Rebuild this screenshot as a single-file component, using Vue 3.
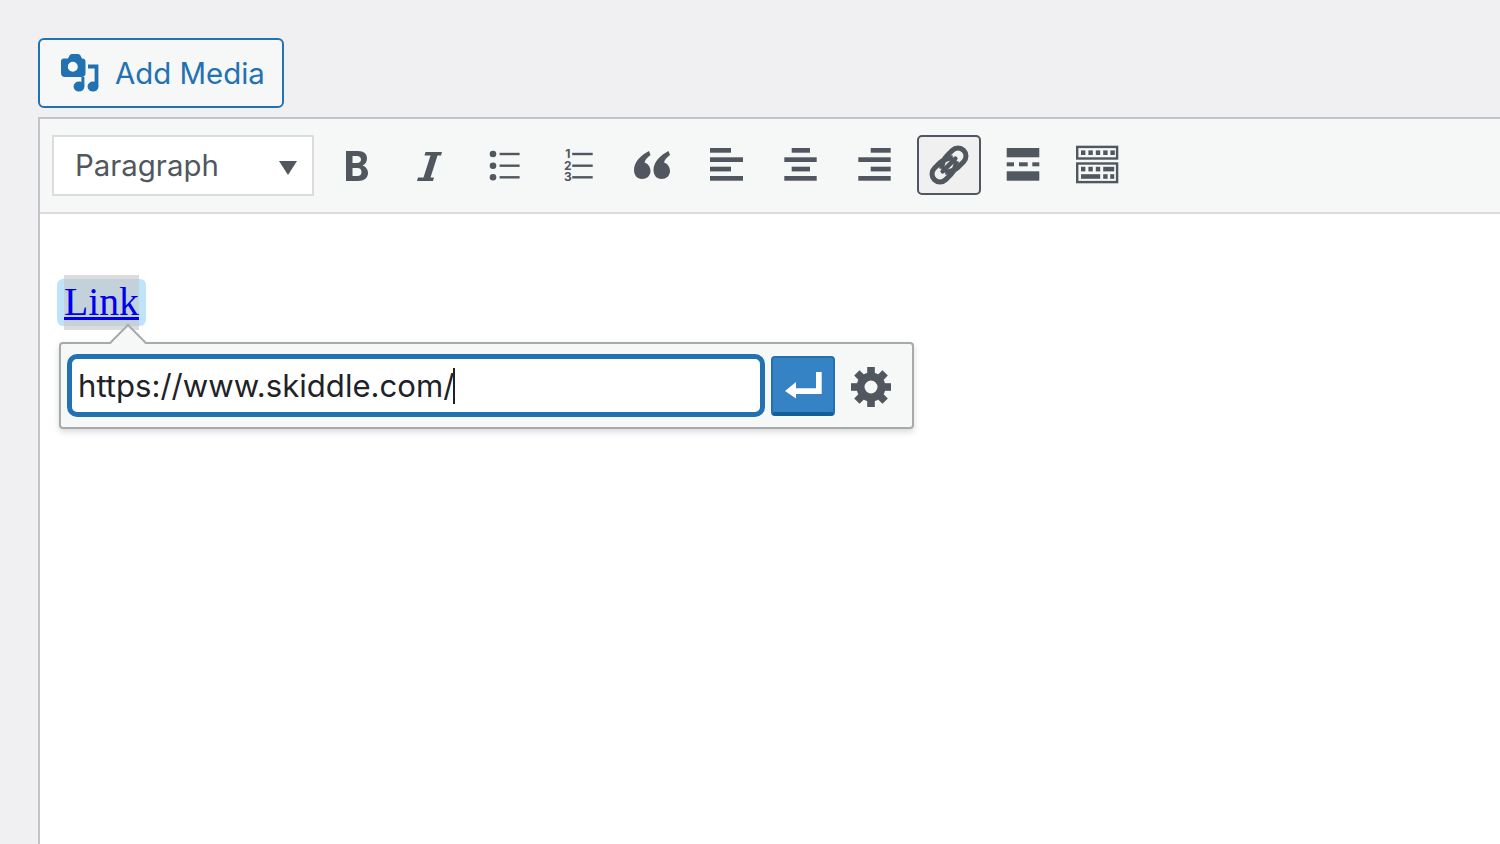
<script setup>
const gearAngles = [0, 45, 90, 135, 180, 225, 270, 315]
const alignLeft = [[3, 3, 21], [3, 12.3, 33], [3, 21.7, 21], [3, 31, 33]]
const alignCenter = [[10.7, 3, 18.3], [3.3, 12.3, 32.4], [10.7, 21.7, 18.3], [3.3, 31, 32.4]]
const alignRight = [[15.7, 3, 20], [3.3, 12.3, 32.4], [15.7, 21.7, 20], [3.3, 31, 32.4]]
const aligns = [alignLeft, alignCenter, alignRight]
const listY = [9, 20.7, 32.3]
const quote = 'M17 6L18.5 10C15 12.5 13 15 12.5 17.5C16 18.5 18.5 22 18.5 26C18.5 31 14.5 34 10 34C5 34 2 30 2 25C2 17 9 10 17 6Z'
const numbers = '1\n2\n3'
</script>

<template>
  <div class="page">
    <button class="add-media">
      <svg class="media-icon" width="40" height="40" viewBox="0 0 40 40">
        <path fill-rule="evenodd" d="M1 8.5Q1 5.5 4 5.5H8L9.5 2.5Q10 1 12 1H18Q20 1 20.5 2.5L22 5.5Q25.5 5.5 25.5 8.5V20Q25.5 24 21.5 24H5Q1 24 1 20ZM12.8 8.8A5 5 0 1 0 12.81 18.8A5 5 0 1 0 12.8 8.8Z" />
        <ellipse cx="19" cy="33.6" rx="5.4" ry="5" />
        <ellipse cx="33" cy="33.6" rx="5.4" ry="5" />
        <path d="M21.4 24H24.4V33H21.4ZM28 11.5H38.4V33.6H34.6V15.5H28Z" />
      </svg>
      <span>Add Media</span>
    </button>

    <div class="editor">
      <div class="toolbar">
        <div class="select">
          <span>Paragraph</span>
          <i class="caret"></i>
        </div>

        <div class="tool">
          <svg width="40" height="40" viewBox="0 0 40 40">
            <path fill-rule="evenodd" d="M10 6H22C28 6 31 9 31 13.5C31 17 29 19.5 26.5 20.5C29.5 21.5 32 24 32 28C32 33 28 36 22 36H10ZM16.5 11V18H21C23.5 18 25 16.8 25 14.5C25 12.2 23.5 11 21 11ZM16.5 23V31H21.5C24 31 25.5 29.7 25.5 27C25.5 24.3 24 23 21.5 23Z" />
          </svg>
        </div>
        <div class="tool">
          <svg width="40" height="40" viewBox="0 0 40 40">
            <path d="M15.5 7H32L31 10.5H27.5L20.5 32.5H24L23 36H7L8 32.5H13.5L20.5 10.5H14.5Z" />
          </svg>
        </div>
        <div class="tool">
          <svg width="40" height="40" viewBox="0 0 40 40">
            <template v-for="y in listY" :key="y">
              <circle cx="9" :cy="y" r="3.3" />
              <rect x="15.6" :y="y - 1.2" width="20" height="2.4" />
            </template>
          </svg>
        </div>
        <div class="tool">
          <span class="nums">{{ numbers }}</span>
          <svg width="21" height="40" viewBox="0 0 21 40">
            <rect v-for="y in listY" :key="y" x="0.2" :y="y - 1.2" width="20.5" height="2.4" />
          </svg>
        </div>
        <div class="tool">
          <svg width="40" height="40" viewBox="0 0 40 40">
            <path :d="quote" />
            <path transform="translate(19.5 0)" :d="quote" />
          </svg>
        </div>
        <div class="tool" v-for="(rows, i) in aligns" :key="i">
          <svg width="40" height="40" viewBox="0 0 40 40">
            <rect v-for="r in rows" :key="r[1]" :x="r[0]" :y="r[1]" :width="r[2]" height="4.7" />
          </svg>
        </div>
        <div class="tool active">
          <svg width="44" height="44" viewBox="0 0 44 44">
            <g class="chain" transform="rotate(-45 22 22)">
              <path d="M30 19.5C26 16.5 23 14 17 14H9.3A8 8 0 0 0 9.3 30H17C23 30 26 27.5 30 24.5" />
              <path d="M14 19.5C18 16.5 21 14 27 14H34.7A8 8 0 0 1 34.7 30H27C21 30 18 27.5 14 24.5" />
              <path class="bar" d="M13 22H31" />
            </g>
          </svg>
        </div>
        <div class="tool">
          <svg width="40" height="40" viewBox="0 0 40 40">
            <rect x="3.7" y="3" width="32.6" height="9.3" />
            <rect x="3.7" y="26.3" width="32.6" height="9.4" />
            <rect x="3.7" y="17.3" width="7.3" height="4" />
            <rect x="16" y="17.3" width="8.7" height="4" />
            <rect x="29.3" y="17.3" width="7" height="4" />
          </svg>
        </div>
        <div class="tool">
          <svg width="44" height="40" viewBox="0 0 44 40">
            <rect class="frame" x="2.2" y="1.9" width="39.9" height="11.6" />
            <rect class="frame" x="2.2" y="18.5" width="39.9" height="18.6" />
            <rect v-for="x in [6, 13.4, 20.8, 28.2, 35.4]" :key="x" :x="x" y="5.4" width="4.4" height="4.6" />
            <rect v-for="x in [6, 13.4, 20.8]" :key="x" :x="x" y="21.8" width="4.4" height="4.6" />
            <rect x="28.2" y="21.8" width="11" height="4.6" />
            <rect x="6" y="29.2" width="19.2" height="4.6" />
            <rect x="28.2" y="29.2" width="4.4" height="4.6" />
            <rect x="35.2" y="29.2" width="4" height="4.6" />
          </svg>
        </div>
      </div>

      <div class="content">
        <a class="link"><i class="glow"></i><span class="word">Link</span></a>

        <div class="popover">
          <i class="pointer"></i>
          <div class="field">
            <span>https://www.skiddle.com/</span><i class="cursor"></i>
          </div>
          <div class="apply">
            <svg width="40" height="32" viewBox="0 0 40 32">
              <path d="M2 22L13 13V19.3H33V3H38.7V25H13V29.6Z" />
            </svg>
          </div>
          <svg class="gear" width="44" height="44" viewBox="-22 -22 44 44">
            <circle r="10.5" class="gear-ring" />
            <rect v-for="a in gearAngles" :key="a" x="-3.8" y="-20" width="7.6" height="8" :transform="`rotate(${a})`" />
          </svg>
        </div>
      </div>
    </div>
  </div>
</template>

<style>
html, body {
  margin: 0;
  background: #f0f0f1;
  overflow: hidden;
}
</style>

<style scoped>
.page {
  height: 844px;
  box-sizing: border-box;
  padding: 38px 0 0 38px;
  background: #f0f0f2;
  font-family: Inter, "Open Sans", sans-serif;
  display: flex;
  flex-direction: column;
  overflow: hidden;
}
.add-media {
  align-self: flex-start;
  display: flex;
  align-items: center;
  box-sizing: border-box;
  width: 246px;
  height: 70px;
  margin: 0 0 9px;
  padding: 0 0 0 20px;
  gap: 15px;
  border: 2px solid #2271b1;
  border-radius: 6px;
  background: #f6f7f7;
  color: #2271b1;
  font: 400 29.4px Inter, sans-serif;
}
.media-icon {
  fill: #2271b1;
  flex: none;
}
.editor {
  flex: 1;
  display: flex;
  flex-direction: column;
  border-left: 2px solid #c3c4c7;
  border-top: 2px solid #c3c4c7;
  background: #fff;
}
.toolbar {
  display: flex;
  align-items: flex-start;
  gap: 10.1px;
  box-sizing: border-box;
  height: 95px;
  padding: 16px 0 0 12px;
  background: #f6f7f7;
  border-bottom: 2px solid #dcdcde;
}
.select {
  position: relative;
  box-sizing: border-box;
  width: 262px;
  height: 61px;
  display: flex;
  align-items: center;
  padding-left: 21px;
  background: #fff;
  border: 2px solid #dcdcde;
  color: #50575e;
  font-size: 29.4px;
}
.caret {
  position: absolute;
  right: 15px;
  top: 24px;
  width: 0;
  height: 0;
  border-left: 9px solid transparent;
  border-right: 9px solid transparent;
  border-top: 14px solid #50575e;
}
.tool {
  box-sizing: border-box;
  width: 64px;
  height: 60px;
  display: flex;
  align-items: center;
  justify-content: center;
  flex: none;
}
.tool svg {
  fill: #50575e;
  flex: none;
}
.nums {
  width: 9px;
  margin-top: 1px;
  white-space: pre;
  text-align: center;
  color: #50575e;
  font: 700 12px/11.7px Inter, sans-serif;
}
.frame {
  fill: none;
  stroke: #50575e;
  stroke-width: 2.4;
}
.active {
  border: 2px solid #50575e;
  border-radius: 5px;
  background: #f0f0f1;
}
.chain path {
  fill: none;
  stroke: #50575e;
  stroke-width: 5;
}
.chain .bar {
  stroke-width: 4.5;
  stroke-linecap: round;
}
.content {
  position: relative;
  flex: 1;
  padding: 61px 0 0 24px;
}
.link {
  position: relative;
  display: inline-block;
  isolation: isolate;
  color: #0000ee;
}
.glow {
  position: absolute;
  z-index: -1;
  left: -7px;
  top: 4px;
  width: 89px;
  height: 47px;
  border-radius: 6px;
  background: #bfe3fb;
}
.word {
  display: block;
  height: 55px;
  line-height: 54px;
  font-family: "Liberation Serif", serif;
  font-size: 39.7px;
  text-decoration: underline;
  text-decoration-thickness: 3px;
  background: rgba(197, 197, 197, 0.6);
}
.popover {
  position: absolute;
  left: 19px;
  top: 128px;
  box-sizing: border-box;
  width: 855px;
  height: 87px;
  display: flex;
  align-items: flex-start;
  padding: 10px 0 0 6px;
  background: #f6f7f7;
  border: 2px solid #a7aaad;
  border-radius: 4px;
  box-shadow: 0 3px 6px rgba(0, 0, 0, 0.15);
}
.pointer {
  position: absolute;
  left: 54px;
  top: -15px;
  width: 26px;
  height: 26px;
  box-sizing: border-box;
  transform: rotate(45deg);
  background: #f6f7f7;
  border-left: 2px solid #a7aaad;
  border-top: 2px solid #a7aaad;
}
.field {
  position: relative;
  box-sizing: border-box;
  width: 698px;
  height: 63px;
  display: flex;
  align-items: center;
  padding-left: 6px;
  background: #fff;
  border: 5px solid #2271b1;
  border-radius: 10px;
  color: #1d2327;
  font-size: 31.1px;
}
.cursor {
  display: block;
  width: 2px;
  height: 36px;
  margin-left: -1px;
  background: #1d2327;
}
.apply {
  box-sizing: border-box;
  width: 64px;
  height: 60px;
  margin: 2px 0 0 6px;
  display: flex;
  align-items: center;
  justify-content: center;
  background: #3582c4;
  border: 2px solid #2271b1;
  border-bottom: 4px solid #135e96;
  border-radius: 4px;
  flex: none;
}
.apply svg {
  fill: #fff;
}
.gear {
  margin: 11px 0 0 14px;
  fill: #50575e;
  flex: none;
}
.gear-ring {
  fill: none;
  stroke: #50575e;
  stroke-width: 8;
}
</style>
